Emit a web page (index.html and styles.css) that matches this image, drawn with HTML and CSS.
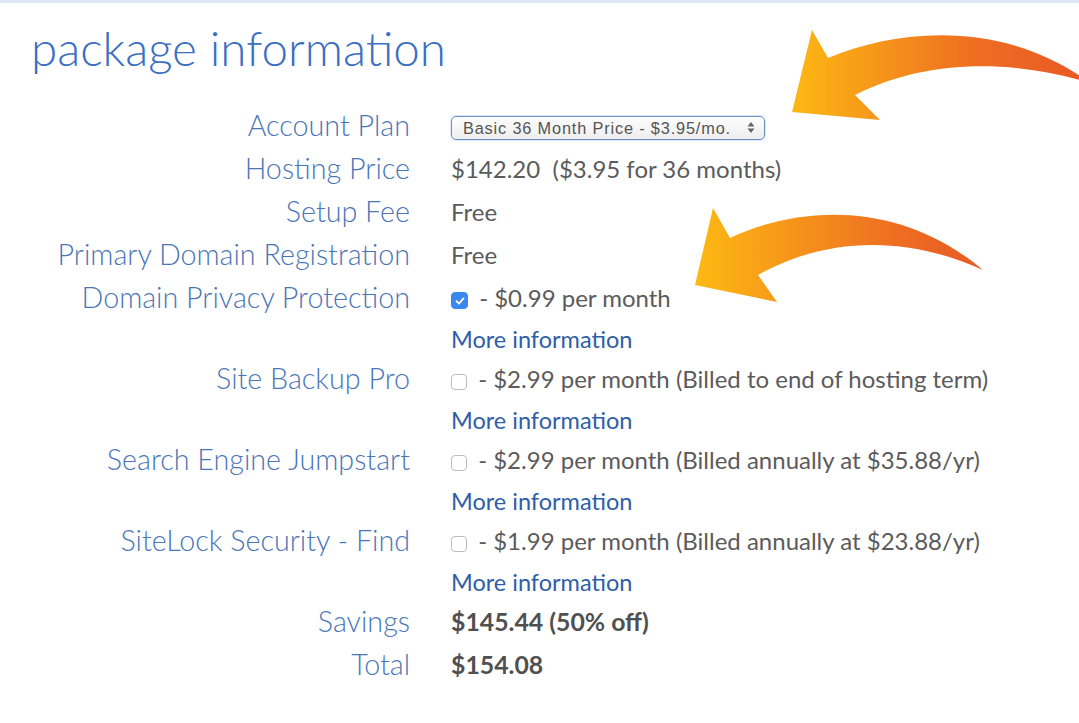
FILE: index.html
```html
<!DOCTYPE html>
<html>
<head>
<meta charset="utf-8">
<link rel="stylesheet" href="styles.css">
</head>
<body>
<div class="page">
  <h1 class="title">package information</h1>
  <div class="table">
    <div class="label">Account Plan</div>
    <div class="value">
      <div class="line sel-line">
        <div class="select"><span class="sel-text">Basic 36 Month Price - $3.95/mo.</span>
          <svg class="updown" width="8" height="13" viewBox="0 0 8 13"><path d="M4 1 L7.5 5.5 L0.5 5.5 Z M4 12 L7.5 7.5 L0.5 7.5 Z" fill="#666"/></svg>
        </div>
      </div>
    </div>

    <div class="label">Hosting Price</div>
    <div class="value"><div class="line">$142.20&nbsp; ($3.95 for 36 months)</div></div>

    <div class="label">Setup Fee</div>
    <div class="value"><div class="line">Free</div></div>

    <div class="label">Primary Domain Registration</div>
    <div class="value"><div class="line">Free</div></div>

    <div class="label">Domain Privacy Protection</div>
    <div class="value">
      <div class="line"><span class="cb checked"><svg width="12" height="12" viewBox="0 0 12 12"><path d="M2.5 6.2 L5 8.6 L9.5 3.4" fill="none" stroke="#fff" stroke-width="1.8" stroke-linecap="round" stroke-linejoin="round"/></svg></span> - $0.99 per month</div>
      <div class="more">More information</div>
    </div>

    <div class="label">Site Backup Pro</div>
    <div class="value">
      <div class="line"><span class="cb"></span> - $2.99 per month (Billed to end of hosting term)</div>
      <div class="more">More information</div>
    </div>

    <div class="label">Search Engine Jumpstart</div>
    <div class="value">
      <div class="line"><span class="cb"></span> - $2.99 per month (Billed annually at $35.88/yr)</div>
      <div class="more">More information</div>
    </div>

    <div class="label">SiteLock Security - Find</div>
    <div class="value">
      <div class="line"><span class="cb"></span> - $1.99 per month (Billed annually at $23.88/yr)</div>
      <div class="more">More information</div>
    </div>

    <div class="label">Savings</div>
    <div class="value"><div class="line strong">$145.44 (50% off)</div></div>

    <div class="label">Total</div>
    <div class="value"><div class="line strong">$154.08</div></div>
  </div>

  <svg class="arrow arrow1" width="300" height="110" viewBox="780 20 300 110">
    <defs>
      <linearGradient id="g1" x1="790" y1="0" x2="1079" y2="0" gradientUnits="userSpaceOnUse">
        <stop offset="0" stop-color="#fdb913"/>
        <stop offset="0.65" stop-color="#ee6d22"/>
        <stop offset="1" stop-color="#e85a24"/>
      </linearGradient>
    </defs>
    <path d="M812 30 L828 58 C 900 28, 1000 22, 1080 76 L1080 80 C 1000 58, 920 62, 855 95 L880 120 L792 112 Z" fill="url(#g1)"/>
  </svg>

  <svg class="arrow arrow2" width="310" height="110" viewBox="690 200 310 110">
    <defs>
      <linearGradient id="g2" x1="695" y1="0" x2="985" y2="0" gradientUnits="userSpaceOnUse">
        <stop offset="0" stop-color="#fdb913"/>
        <stop offset="0.7" stop-color="#ee6d22"/>
        <stop offset="1" stop-color="#e85a24"/>
      </linearGradient>
    </defs>
    <path d="M713 208 L730 238 C 800 205, 900 200, 983 270 C 900 232, 820 240, 758 275 L777 302 L695 285 Z" fill="url(#g2)"/>
  </svg>
</div>
</body>
</html>
```

FILE: styles.css
```css
html, body {
  margin: 0;
  padding: 0;
  background: #ffffff;
}
body {
  width: 1079px;
  height: 723px;
  overflow: hidden;
  font-family: "Lato", "Open Sans", sans-serif;
}
.page {
  position: relative;
  border-top: 3px solid #dfe8f5;
  height: 720px;
}
.title {
  margin: 0;
  padding: 17px 0 0 31px;
  height: 82px;
  box-sizing: border-box;
  font-weight: 300;
  font-size: 47.5px;
  line-height: 56px;
  color: #3a6fc2;
}
.table {
  display: grid;
  grid-template-columns: 410px 1fr;
  column-gap: 41px;
  padding-top: 19px;
}
.label {
  text-align: right;
  font-size: 28.7px;
  font-weight: 300;
  color: #4a76b6;
  line-height: 43px;
  height: 43px;
  white-space: nowrap;
}
.value {
  color: #5b5b5b;
  font-size: 24px;
  font-weight: 400;
}
.line {
  height: 43px;
  line-height: 43px;
  display: flex;
  align-items: center;
  white-space: pre;
}
.line.strong {
  font-weight: 700;
  font-size: 24.8px;
  color: #505050;
}
.more {
  height: 38px;
  padding-top: 3px;
  line-height: 35px;
  font-size: 23.5px;
  color: #2f5ea9;
  box-sizing: border-box;
}
.select {
  margin-top: 4px;
  width: 314px;
  height: 24px;
  box-sizing: border-box;
  border: 1.5px solid #6b8fc7;
  border-radius: 5px;
  background: linear-gradient(#fdfdfd, #eeeeee);
  display: flex;
  align-items: center;
  justify-content: space-between;
  padding: 0 9px 0 11px;
  box-shadow: 0 0 0 1px rgba(120, 160, 220, 0.25);
}
.sel-text {
  font-family: "Liberation Sans", Arial, sans-serif;
  font-size: 16.3px;
  letter-spacing: 0.85px;
  line-height: 20px;
  color: #555555;
}
.cb {
  display: inline-block;
  width: 16px;
  height: 16px;
  box-sizing: border-box;
  border: 1px solid #bdbdbd;
  border-radius: 4px;
  background: #fff;
  margin-right: 5px;
  margin-top: 6px;
}
.cb.checked {
  background: #3b87f0;
  border-color: #3b87f0;
  width: 17px;
  height: 17px;
  display: inline-flex;
  align-items: center;
  justify-content: center;
}
.arrow {
  position: absolute;
}
.arrow1 {
  left: 780px;
  top: 17px;
}
.arrow2 {
  left: 690px;
  top: 197px;
}
```
